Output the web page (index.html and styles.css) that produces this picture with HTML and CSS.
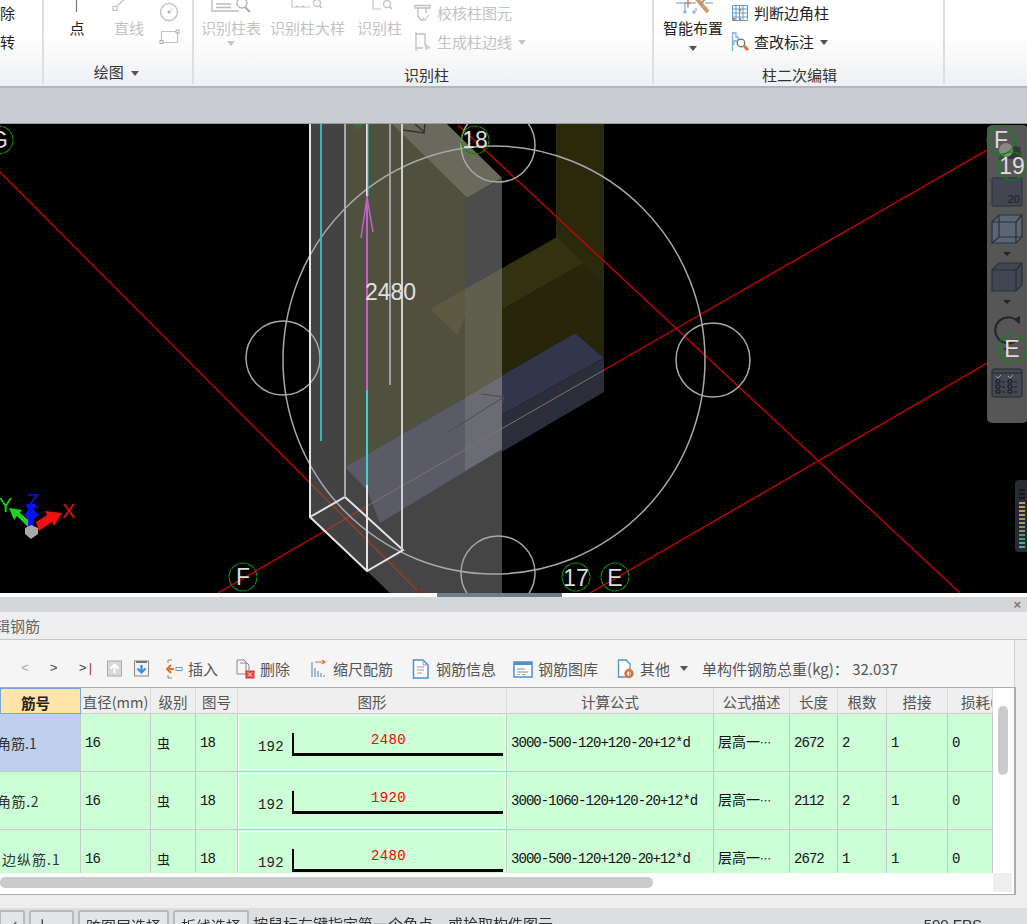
FILE: index.html
```html
<!DOCTYPE html>
<html lang="zh-CN">
<head>
<meta charset="utf-8">
<title>编辑钢筋</title>
<link rel="stylesheet" href="styles.css">
</head>
<body>
<div class="page">
  <header class="ribbon">
    <section class="group g1">
      <div class="stack-text"><span>除</span><span>转</span></div>
    </section>
    <section class="group g2">
      <div class="group-body">
        <div class="big w40">
          <svg class="big-icon" width="40" height="18" viewBox="0 0 40 18"><path d="M19.5 0V12" stroke="#777" stroke-width="1.2"/></svg>
          <span class="dark">点</span>
        </div>
        <div class="big w40">
          <svg class="big-icon" width="40" height="18" viewBox="0 0 40 18"><path d="M8 6 16 -1" stroke="#c4c4c4" stroke-width="1.2"/><rect x="4" y="6.500" width="4" height="4" fill="none" stroke="#bbb"/></svg>
          <span class="off">直线</span>
        </div>
        <div class="tiny-col">
          <svg width="24" height="24" viewBox="0 0 24 24"><circle cx="12" cy="12" r="8.500" fill="none" stroke="#c4c4c4" stroke-width="1.500"/><circle cx="12" cy="12" r="1.500" fill="#aaa"/><path d="M12 12 16 8" stroke="#c4c4c4"/></svg>
          <svg width="24" height="20" viewBox="0 0 24 20"><path d="M4.500 4.500H20.500V15.500H4.500Z" fill="none" stroke="#c4c4c4" stroke-width="1.200"/><rect x="3" y="13.500" width="3" height="3" fill="#fff" stroke="#aaa"/><rect x="19" y="3" width="3" height="3" fill="#fff" stroke="#aaa"/></svg>
        </div>
      </div>
      <div class="group-label label-draw">绘图 <i class="caret dark-caret"></i></div>
    </section>
    <section class="group g3">
      <div class="group-body">
        <div class="big w60">
          <svg class="big-icon" width="60" height="18" viewBox="0 0 60 18"><path d="M11 -2V11H38M15 4H30M15 7.500H30" fill="none" stroke="#bbb" stroke-width="1.300"/><circle cx="41" cy="3" r="5" fill="none" stroke="#bbb" stroke-width="1.500"/><path d="M44 7 49 12" stroke="#aaa" stroke-width="2"/></svg>
          <span class="off">识别柱表</span>
          <i class="caret off-caret"></i>
        </div>
        <div class="big w75">
          <svg class="big-icon" width="75" height="18" viewBox="0 0 75 18"><path d="M22 -2V7H40M26 6H28M32 6H34" fill="none" stroke="#c4c4c4" stroke-width="1.200"/><circle cx="47" cy="3" r="3.500" fill="none" stroke="#c4c4c4" stroke-width="1.300"/><path d="M49.500 5.500 52 8" stroke="#bbb" stroke-width="1.500"/></svg>
          <span class="off">识别柱大样</span>
        </div>
        <div class="big w45">
          <svg class="big-icon" width="45" height="18" viewBox="0 0 45 18"><path d="M16 -2V9H24" fill="none" stroke="#c4c4c4" stroke-width="1.200"/><circle cx="30" cy="4" r="3.500" fill="none" stroke="#c4c4c4" stroke-width="1.300"/><path d="M32.500 6.500 35 9" stroke="#bbb" stroke-width="1.500"/></svg>
          <span class="off">识别柱</span>
        </div>
        <div class="small-col">
          <div class="small-row off">
            <svg width="18" height="20" viewBox="0 0 18 20"><path d="M1 2.500H16V5H1ZM4 5V13L7 17H10M12 5V10" fill="none" stroke="#c0c0c0" stroke-width="1.300"/><path d="M9 15 11 17 15 12" fill="none" stroke="#c8c8c8" stroke-width="1.200"/></svg>
            <span>校核柱图元</span>
          </div>
          <div class="small-row off">
            <svg width="18" height="20" viewBox="0 0 18 20"><path d="M2 0V19M2 2H11V14M2 16H9" fill="none" stroke="#c0c0c0" stroke-width="1.300"/><path d="M11 11 17 16 11 18Z" fill="#d0d0d0"/></svg>
            <span>生成柱边线</span>
            <i class="caret off-caret row-caret"></i>
          </div>
        </div>
      </div>
      <div class="group-label label-shift">识别柱</div>
    </section>
    <section class="group g4">
      <div class="group-body">
        <div class="big w60 smart">
          <svg class="big-icon" width="60" height="18" viewBox="0 0 60 18"><path d="M13 3H33M25 -1V8M33 8V11M22 3V11M42 3H50" fill="none" stroke="#5d9bd5" stroke-width="1"/><path d="M25 0V6M22 3H28" stroke="#e8702a" stroke-width="1"/><circle cx="22" cy="12" r="1.800" fill="#8fb8dc"/><circle cx="31" cy="12" r="1.800" fill="#8fb8dc"/><path d="M33 -2 45 12" stroke="#d49a63" stroke-width="4"/><path d="M42 -1 37 5" stroke="#999" stroke-width="2"/></svg>
          <span class="dark">智能布置</span>
          <i class="caret dark-caret"></i>
        </div>
        <div class="small-col">
          <div class="small-row dark">
            <svg width="18" height="20" viewBox="0 0 18 20"><path d="M1.500 2.500H16.500V17.500H1.500ZM5 2.500V17.500M8.500 2.500V17.500M12 2.500V17.500M1.500 6H16.500M1.500 10H16.500M1.500 14H16.500" fill="none" stroke="#5d9bd5" stroke-width="1"/><circle cx="9" cy="7" r="1.300" fill="#e8702a"/><circle cx="3" cy="16" r="1.300" fill="#e8702a"/><circle cx="9" cy="16" r="1.300" fill="#e8702a"/></svg>
            <span>判断边角柱</span>
          </div>
          <div class="small-row dark">
            <svg width="18" height="20" viewBox="0 0 18 20"><path d="M1.500 0V19M1.500 1H5V5H7V9H3V13" fill="none" stroke="#7aaedc" stroke-width="1.300"/><circle cx="10" cy="11" r="3.800" fill="#fff" stroke="#666" stroke-width="1.200"/><path d="M13 14 17 18" stroke="#e8702a" stroke-width="3"/></svg>
            <span>查改标注</span>
            <i class="caret dark-caret row-caret"></i>
          </div>
        </div>
      </div>
      <div class="group-label label-edit">柱二次编辑</div>
    </section>
  </header>

  <div class="subbar"></div>

  <svg class="scene" width="1027" height="469" viewBox="0 124 1027 469" role="img">
    <rect x="0" y="124" width="1027" height="469" fill="#000"/>
    <path d="M556 124H604V300H556Z" fill="#2a290c"/>
    <path d="M458 335 583 263 604 284V358L575 333 345 467Z" fill="#27260a"/>
    <path d="M430 309 557 237 583 263 458 335Z" fill="#33320f"/>
    <path d="M345 467 575 333 604 358 367 490Z" fill="#33354b"/>
    <path d="M367 490 604 358V392L380 523Z" fill="#2c2d3b"/>
    <path d="M310 124H345V497L310 517Z" fill="#434343"/>
    <path d="M345 124H392L467 198 502 178V593H390L367 571 403 550 345 497Z" fill="#454545"/>
    <path d="M310 517 345 497 403 550 367 571Z" fill="#434343"/>
    <path d="M345 124H392L467 198 465 398 345 467Z" fill="#50503e"/>
    <path d="M392 124H447L502 178 467 198Z" fill="#6a6a5c"/>
    <path d="M465 199 502 179V268L465 289Z" fill="#4c4c4c"/>
    <path d="M465 289 502 268V376L465 398Z" fill="#5f5f4e"/>
    <path d="M430 309 465 289V316L458 335Z" fill="#5d5a42"/>
    <path d="M345 467 465 398 502 376V449L380 523 367 490Z" fill="#5a5b66"/>
    <path d="M465 398 502 376V449L465 471Z" fill="#6b6b73"/>
    <path d="M352 124H363L358 130Z" fill="#3b6b3b"/>
    <path d="M403 130 424 133 425 124M415 124 424 132" fill="none" stroke="#333" stroke-width="1.500"/>
    <path d="M447 433 504 397 502 403M481 394 504 397" fill="none" stroke="#4b4b4b"/>

    <g class="red">
      <path d="M0 172 308 481M417 590 421 593M458 125 960 593M590 593 1027 340M1027 127 604 370M323 532 218 593"/>
    </g>
    <path d="M308 481 417 590M367 506 323 532" fill="none" stroke="#a83a2a" stroke-width="1.200"/>
    <path d="M604 370 367 506" fill="none" stroke="#8a6d6d" stroke-width="1"/>
    <g class="ring">
      <ellipse cx="494" cy="360" rx="211" ry="214"/>
      <circle cx="498" cy="145" r="37"/>
      <circle cx="283" cy="358" r="37"/>
      <circle cx="713" cy="360" r="37"/>
      <circle cx="498" cy="573" r="37"/>
    </g>
    <g class="wire">
      <path d="M310 124V517L367 571 403 550 345 497 310 517M367 124V571"/>
    </g>
    <path d="M345 124V497" stroke="#a8a8a8" stroke-width="2" fill="none"/>
    <path d="M390 124V385" stroke="#a0a0a0" stroke-width="2" fill="none"/>
    <path d="M402 124V550" stroke="#d0d0d0" stroke-width="2" fill="none"/>
    <path d="M321 124V441" stroke="#3ab5b8" stroke-width="2" fill="none"/>
    <path d="M368 124V196" stroke="#3ab5b8" stroke-width="1" fill="none"/>
    <path d="M367 196V390" stroke="#c060c8" stroke-width="2" fill="none"/>
    <path d="M367 390V485" stroke="#3ed0d0" stroke-width="2" fill="none"/>
    <path d="M361 238 367 197 373 232" stroke="#c060c8" stroke-width="1.500" fill="none"/>
    <text class="dim-text" x="365" y="300">2480</text>

    <g class="badge"><circle cx="-1" cy="140" r="14"/><text x="-1" y="148">G</text></g>
    <g class="badge"><circle cx="475" cy="140" r="14"/><text x="475" y="148">18</text></g>
    <g class="badge"><circle cx="243" cy="577" r="14"/><text x="243" y="585">F</text></g>
    <g class="badge"><circle cx="576" cy="577" r="14"/><text x="576" y="586">17</text></g>
    <g class="badge"><circle cx="615" cy="577" r="14"/><text x="615" y="586">E</text></g>

    <rect x="987" y="125" width="41" height="298" rx="5" fill="#565656"/>
    <path d="M998 160 1004 148Q1012 144 1020 147L1022 158" fill="#2e2e2e" opacity=".8"/>
    <circle cx="1006" cy="150" r="7" fill="#888"/>
    <rect x="992" y="178" width="30" height="28" rx="1" fill="#404652" stroke="#2c2f36"/>
    <text class="panel-num" x="1020" y="203">20</text>
    <g stroke="#2b2e34" stroke-width="1.200" fill="#5a6675">
      <path d="M992 222 999 215H1022V237L1016 243H992Z"/>
      <path d="M992 222H1016V243M1016 222 1022 215M999 215V237H1022M999 237 992 243" fill="none"/>
    </g>
    <path d="M1003 252H1011L1007 256Z" fill="#222"/>
    <g stroke="#2b2e34" stroke-width="1.200" fill="#404652">
      <path d="M992 270 999 263H1022V285L1016 291H992Z"/>
      <path d="M992 270H1016V291M1016 270 1022 263" fill="none"/>
    </g>
    <path d="M1003 300H1011L1007 304Z" fill="#222"/>
    <path d="M1019 323A13 13 0 1 0 1017 340" fill="none" stroke="#25272b" stroke-width="2.200"/>
    <path d="M1014 319 1020 324 1020 316Z" fill="#25272b"/>
    <path d="M1003 348H1011L1007 352Z" fill="#222"/>
    <rect x="992" y="369" width="30" height="28" rx="2" fill="#434954" stroke="#25272b"/>
    <path d="M992 373H1022" stroke="#25272b" fill="none"/>
    <path d="M996 376 998 378 1001 375M1008 376 1010 378 1013 375" stroke="#9aa0a8" fill="none"/>
    <path d="M996 380H1000V383H996ZM996 385H1000V388H996ZM996 390H1000V393H996ZM1008 380H1012V383H1008ZM1008 385H1012V388H1008ZM1008 390H1012V393H1008ZM1002 382H1005M1002 387H1005M1002 392H1005M1014 382H1017M1014 387H1017M1014 392H1017" stroke="#16181c" fill="none"/>

    <g class="badge"><circle cx="1001" cy="140" r="14"/><text x="1001" y="148">F</text></g>
    <g class="badge"><circle cx="1012" cy="166" r="14"/><text x="1012" y="174">19</text></g>
    <g class="badge"><circle cx="1012" cy="349" r="14"/><text x="1012" y="357">E</text></g>

    <rect x="1015" y="480" width="14" height="72" rx="4" fill="#282b33"/>
    <path d="M1019 490H1025M1019 494H1025M1019 498H1025" stroke="#17181c" stroke-width="2"/>
    <path d="M1019 503H1025M1019 507H1025M1019 511H1025M1019 515H1025" stroke="#c89a5f" stroke-width="2"/>
    <path d="M1019 519H1025M1019 523H1025" stroke="#a49a68" stroke-width="2"/>
    <path d="M1019 527H1025M1019 531H1025" stroke="#7c9a6c" stroke-width="2"/>
    <path d="M1019 535H1025M1019 539H1025" stroke="#4aa070" stroke-width="2"/>
    <path d="M1019 543H1025M1019 547H1025" stroke="#3fb0b4" stroke-width="2"/>

    <path d="M28 527 17 516 14 520 9 508 22 510 20 513 32 523Z" fill="#1dd41d"/>
    <path d="M36 522 47 515 45 511 62 513 54 526 52 522 39 531Z" fill="#f01010"/>
    <path d="M28 529V519L24 515 28 510 26 504H36L34 510 39 515 34 519V529Z" fill="#0a10f0"/>
    <path d="M31 525 38 528V534L31 539 25 534V528Z" fill="#a8a8a8"/>
    <text class="axis axis-y" x="-1" y="512">Y</text>
    <text class="axis axis-z" x="27" y="508">Z</text>
    <text class="axis axis-x" x="62" y="518">X</text>
  </svg>

  <div class="splitter"><div class="grip"></div></div>

  <section class="panel">
    <div class="panel-top"><span class="close">×</span></div>
    <div class="panel-title"><span>辑钢筋</span></div>
    <div class="toolbar">
      <div class="nav-arrows"><span class="nav-off">&lt;</span><span>&gt;</span><span>&gt;<b class="nav-bar">|</b></span></div>
      <svg class="ico up" width="15" height="17" viewBox="0 0 15 17"><rect x=".5" y="1" width="14" height="15" fill="#d9d9d9" stroke="#aaa"/><path d="M7.500 13V5M3.500 8.500 7.500 4.500 11.500 8.500" fill="none" stroke="#fff" stroke-width="2"/></svg>
      <svg class="ico down" width="15" height="17" viewBox="0 0 15 17"><rect x=".5" y="1" width="14" height="15" fill="#eef3f9" stroke="#888"/><path d="M2 2H13" stroke="#777" stroke-width="2"/><path d="M7.500 5V12M3.500 8.500 7.500 12.500 11.500 8.500" fill="none" stroke="#3a8ee0" stroke-width="2.200"/></svg>
      <div class="tool">
        <svg width="17" height="20" viewBox="0 0 17 20"><path d="M2 1H6M2 1V4M2 16V19H6M3 7H5M3 13H5" fill="none" stroke="#888"/><path d="M1 10H8M5 6 1 10 5 14" fill="none" stroke="#e8702a" stroke-width="2"/><rect x="10" y="8.500" width="6" height="3" fill="#fff" stroke="#5d9bd5"/></svg>
        <span>插入</span>
      </div>
      <div class="tool">
        <svg width="19" height="20" viewBox="0 0 19 20"><path d="M1 1H8L10 3V15H1ZM4 4H11L13 6V11" fill="#f5f5f5" stroke="#888"/><rect x="10" y="12" width="8" height="7" fill="#e44" stroke="#c33"/><path d="M12 13.500 16 17.500M16 13.500 12 17.500" stroke="#fff"/></svg>
        <span>删除</span>
      </div>
      <div class="tool t-scale">
        <svg width="17" height="20" viewBox="0 0 17 20"><path d="M1 3V18M4 9V18M7 12V18M10 14V18M13 16V18" stroke="#7f98b2" stroke-width="1.300" fill="none"/><path d="M4 3H13M11 1 14 3 11 5" stroke="#e8702a" fill="none" stroke-width="1.200"/></svg>
        <span>缩尺配筋</span>
      </div>
      <div class="tool t-info">
        <svg width="19" height="20" viewBox="0 0 19 20"><path d="M1.500 1H11L16 6V19H1.500Z" fill="#fff" stroke="#4a90d9" stroke-width="1.500"/><path d="M11 1V6H16M5 8H12M5 11H12M5 14H10" fill="none" stroke="#999"/></svg>
        <span>钢筋信息</span>
      </div>
      <div class="tool t-lib">
        <svg width="20" height="20" viewBox="0 0 20 20"><rect x="1" y="3" width="18" height="15" fill="#fff" stroke="#4a90d9" stroke-width="1.500"/><rect x="1" y="3" width="18" height="3" fill="#4a90d9"/><path d="M4 10H12M4 13H15" stroke="#888"/><path d="M4 15.500H7" stroke="#e8a13a"/><path d="M9 15.500H12" stroke="#5cb85c"/></svg>
        <span>钢筋图库</span>
      </div>
      <div class="tool t-other">
        <svg width="18" height="20" viewBox="0 0 18 20"><path d="M1.500 1H9L13 5V18H1.500Z" fill="#fff" stroke="#4a90d9" stroke-width="1.300"/><circle cx="12" cy="14.500" r="3.500" fill="none" stroke="#e8702a" stroke-width="2.500"/></svg>
        <span>其他</span>
      </div>
      <i class="caret dark-caret t-caret"></i>
      <span class="total">单构件钢筋总重(kg)： 32.037</span>
    </div>

    <div class="frame">
      <div class="frame-main">
        <div class="grid-clip">
          <table class="grid">
            <colgroup>
              <col class="c1"><col class="c2"><col class="c3"><col class="c4"><col class="c5"><col class="c6"><col class="c7"><col class="c8"><col class="c9"><col class="c10"><col class="c11">
            </colgroup>
            <thead>
              <tr>
                <th class="active-head">筋号</th>
                <th>直径(mm)</th>
                <th>级别</th>
                <th>图号</th>
                <th>图形</th>
                <th>计算公式</th>
                <th>公式描述</th>
                <th>长度</th>
                <th>根数</th>
                <th>搭接</th>
                <th class="clip-head">损耗(%)</th>
              </tr>
            </thead>
            <tbody>
              <tr class="r1">
                <td class="name selected"><span class="name-a">角筋.1</span></td>
                <td>16</td><td class="grade">虫</td><td>18</td>
                <td class="shape-cell"><div class="shape"><span class="hook">192</span><div class="bar">2480</div></div></td>
                <td>3000-500-120+120-20+12*d</td><td class="desc">层高一<span class="ell">…</span></td><td>2672</td><td>2</td><td>1</td><td>0</td>
              </tr>
              <tr class="r2">
                <td class="name"><span class="name-a wide">角筋.2</span></td>
                <td>16</td><td class="grade">虫</td><td>18</td>
                <td class="shape-cell"><div class="shape"><span class="hook">192</span><div class="bar">1920</div></div></td>
                <td>3000-1060-120+120-20+12*d</td><td class="desc">层高一<span class="ell">…</span></td><td>2112</td><td>2</td><td>1</td><td>0</td>
              </tr>
              <tr class="r3">
                <td class="name"><span class="name-b">边纵筋.1</span></td>
                <td>16</td><td class="grade">虫</td><td>18</td>
                <td class="shape-cell"><div class="shape"><span class="hook">192</span><div class="bar">2480</div></div></td>
                <td>3000-500-120+120-20+12*d</td><td class="desc">层高一<span class="ell">…</span></td><td>2672</td><td>1</td><td>1</td><td>0</td>
              </tr>
            </tbody>
          </table>
        </div>
        <div class="vscroll"><div class="vthumb"></div></div>
      </div>
      <div class="frame-foot">
        <div class="hscroll"><div class="hthumb"></div></div>
        <div class="corner"></div>
      </div>
    </div>
    <div class="panel-bottom"></div>
  </section>

  <footer class="status">
    <span class="st-btn b1">∠</span>
    <span class="st-btn b2">十 ·</span>
    <span class="st-btn b3">跨图层选择</span>
    <span class="st-btn b4">折线选择</span>
    <span class="st-msg">按鼠标左键指定第一个角点，或拾取构件图元</span>
    <span class="st-fps">500 FPS</span>
  </footer>
</div>
</body>
</html>
```
FILE: styles.css
```css
* { box-sizing: border-box; }
html, body { margin: 0; padding: 0; background: #fff; }
body { width: 1027px; height: 924px; overflow: hidden; font-family: "Noto Sans CJK SC", "Liberation Sans", sans-serif; }
.page { width: 1027px; height: 924px; overflow: hidden; display: flex; flex-direction: column; filter: blur(.35px); }

/* ribbon */
.ribbon { height: 88px; flex: none; display: flex; background: linear-gradient(#fff 0, #fff 35px, #eff0f2 86px); border-bottom: 2px solid #b4b7ba; font-size: 15px; line-height: 20px; }
.group { height: 84px; border-right: 2px solid #dcdee0; flex: none; display: flex; flex-direction: column; margin-right: 1px; }
.g1 { width: 44px; }
.g2 { width: 149px; }
.g3 { width: 459px; }
.g4 { width: 290px; }
.stack-text { display: flex; flex-direction: column; gap: 9px; padding-top: 3px; color: #222; }
.group-body { height: 62px; display: flex; flex: none; }
.g2 .group-body { padding-left: 12px; gap: 12px; }
.g3 .group-body { padding-left: 6px; gap: 12px; }
.g4 .group-body { padding-left: 8px; gap: 8px; }
.big { display: flex; flex-direction: column; align-items: center; flex: none; }
.big-icon { display: block; }
.w40 { width: 40px; }
.w45 { width: 45px; }
.w60 { width: 60px; margin-right: -3px; }
.w75 { width: 75px; }
.g4 .w60 { margin-right: 0; }
.tiny-col { width: 24px; margin-left: -4px; display: flex; flex-direction: column; gap: 3px; }
.small-col { display: flex; flex-direction: column; gap: 3px; }
.small-row { height: 26px; display: flex; align-items: center; gap: 5px; white-space: nowrap; }
.off { color: #c2c2c2; }
.dark { color: #222; }
.caret { display: inline-block; width: 0; height: 0; border-left: 4.500px solid transparent; border-right: 4.500px solid transparent; border-top: 5px solid #666; }
.big .caret { margin-top: 3px; }
.big.smart .caret { margin-top: 8px; }
.off-caret { border-top-color: #c6c6c6; }
.dark-caret { border-top-color: #555; }
.row-caret { margin-left: 1px; }
.group-label { text-align: center; color: #333; height: 20px; line-height: 20px; white-space: nowrap; }
.label-draw { margin-left: -4px; }
.label-draw .caret { margin-left: 4px; vertical-align: 2px; }
.label-shift { margin-top: 3px; padding-left: 6px; }
.label-edit { margin-top: 3px; padding-left: 1px; }

.subbar { height: 36px; flex: none; background: #c9ccd0; border-bottom: 1px solid #9a9da0; }

/* 3d canvas */
.scene { display: block; flex: none; }
.red path { fill: none; stroke: #d40000; stroke-width: 1.300; }
.ring circle, .ring ellipse { fill: none; stroke: #a8a8a8; stroke-width: 1.500; }
.wire path { fill: none; stroke: #e4e4e4; stroke-width: 2; }
.dim-text { font: 23px "Liberation Sans", sans-serif; fill: #e0e0e0; }
.badge circle { fill: none; stroke: #0b8a0b; stroke-width: 1.200; stroke-dasharray: 8 .7; }
.badge text { font: 23px "Liberation Sans", sans-serif; fill: #ddd; text-anchor: middle; }
.panel-num { font: 11px "Liberation Sans", sans-serif; fill: #1c1f24; text-anchor: end; }
.axis { font: 20px "Liberation Sans", sans-serif; }
.axis-y { fill: #1dd41d; }
.axis-z { fill: #0a10f0; }
.axis-x { fill: #e01010; }

.splitter { height: 4px; flex: none; background: #fff; display: flex; justify-content: center; padding-right: 28px; }
.grip { width: 125px; height: 4px; background: #6f7d8c; }

/* panel */
.panel { flex: none; height: 311px; background: #eeeeee; display: flex; flex-direction: column; }
.panel-top { height: 15px; flex: none; background: #d4d6da; display: flex; justify-content: flex-end; align-items: center; padding-right: 6px; }
.close { color: #777; font: bold 13px/15px "Liberation Sans", sans-serif; }
.panel-title { height: 28px; flex: none; background: #efefef; border-bottom: 1px solid #c6c6c6; color: #666; font-size: 15px; line-height: 27px; overflow: hidden; white-space: nowrap; }
.panel-title span { display: block; margin-left: -5px; }
.toolbar { height: 47px; flex: none; margin-right: 12px; background: #f5f5f5; border-right: 1px solid #d0d0d0; display: flex; align-items: center; gap: 18px; padding-top: 10px; font-size: 15px; color: #555; white-space: nowrap; }
.nav-arrows { width: 107px; padding-left: 21px; display: flex; gap: 21px; font: 13px "Liberation Mono", monospace; color: #444; margin-right: -18px; }
.nav-off { color: #aaa; }
.nav-bar { color: #a33; font-weight: 400; }
.ico { flex: none; }
.down { margin-left: -6px; margin-right: -1px; }
.tool { display: flex; align-items: center; gap: 5px; flex: none; }
.tool svg { flex: none; display: block; }
.t-scale { margin-left: 3px; }
.t-info { margin-left: 1px; }
.t-lib { margin-left: -1px; }
.t-other { margin-left: 1px; }
.t-caret { margin-left: -8px; }
.total { margin-left: -4px; font-size: 15px; color: #555; }

/* table */
.frame { height: 208px; flex: none; margin-right: 11px; background: #fff; border-top: 1px solid #b0b0b0; border-right: 2px solid #a8adb3; border-bottom: 1px solid #a8adb3; display: flex; flex-direction: column; }
.frame-main { height: 185px; flex: none; display: flex; overflow: hidden; }
.grid-clip { width: 993px; height: 185px; flex: none; overflow: hidden; }
.grid { table-layout: fixed; width: 993px; border-collapse: separate; border-spacing: 0; }
.c1 { width: 81px; } .c2 { width: 70px; } .c3 { width: 45px; } .c4 { width: 42px; } .c5 { width: 269px; } .c6 { width: 207px; }
.c7 { width: 76px; } .c8 { width: 48px; } .c9 { width: 49px; } .c10 { width: 61px; } .c11 { width: 45px; }
.grid th { height: 26px; padding: 2px 0 0; background: #efefef; border-right: 1px solid #dadada; border-bottom: 1px solid #d0d0d0; font-size: 14.500px; font-weight: 400; color: #555; white-space: nowrap; overflow: hidden; }
.grid th.active-head { background: #ffe6a8; color: #222; font-weight: 700; border: 1px solid #7ba7d7; padding-right: 10px; }
.grid th.clip-head { text-align: left; padding-left: 13px; }
.grid td { padding: 0 0 0 4px; background: #ccffd6; border-right: 1px solid #c8c8c8; border-bottom: 1px solid #c8c8c8; font: 14px "Liberation Mono", "Noto Sans CJK SC", monospace; letter-spacing: -.95px; color: #111; white-space: nowrap; overflow: hidden; vertical-align: middle; }
.r1 td { height: 58px; }
.r2 td { height: 57px; }
.r3 td { height: 58px; }
.grid td.name { padding: 0; font: 14px "Noto Sans CJK SC", sans-serif; letter-spacing: 0; color: #333; }
.grid td.selected { background: #bfd0ee; }
.name-a { display: block; margin-left: -3px; }
.name-a.wide { letter-spacing: .6px; }
.name-b { display: block; margin-left: 2px; letter-spacing: 1px; }
.grid td.grade { font: 13px "Noto Sans CJK SC", sans-serif; letter-spacing: 0; padding-left: 6px; }
.grid td.desc { font: 14px/14px "Noto Sans CJK SC", sans-serif; letter-spacing: 0; padding-bottom: 2px; }
.ell { font-size: 11px; letter-spacing: -1px; }
.grid td.shape-cell { padding: 0; vertical-align: top; letter-spacing: 0; }
.shape { height: 53px; margin: 2px 1px; background: #ccffd6; outline: 1px solid #fff; display: flex; align-items: flex-start; padding-left: 19px; padding-top: 17px; }
.hook { width: 34px; font: 14px "Liberation Mono", monospace; color: #222; padding-top: 6px; letter-spacing: .2px; }
.bar { width: 211px; height: 23px; border-left: 2px solid #000; border-bottom: 3px solid #000; color: #f00; text-align: center; font: 14px/15px "Liberation Mono", monospace; letter-spacing: .3px; padding-right: 20px; }
.vscroll { flex: 1; background: #fff; padding: 18px 0 0 5px; }
.vthumb { width: 10px; height: 69px; border-radius: 5px; background: #cbcbcb; }
.frame-foot { flex: 1; display: flex; }
.hscroll { width: 993px; flex: none; padding-top: 4px; background: #fff; }
.hthumb { width: 653px; height: 11px; border-radius: 5px; background: #cbcbcb; }
.corner { width: 19px; height: 19px; background: #eeeeee; }
.panel-bottom { flex: 1; background: #eeeeee; }

/* status */
.status { flex: 1; min-height: 0; background: #dcdee0; display: flex; align-items: flex-start; gap: 4px; padding-top: 2px; font-size: 15px; line-height: 28px; color: #333; white-space: nowrap; overflow: hidden; }
.st-btn { height: 24px; border: 2px solid #b8babc; border-radius: 2px; background: #e4e5e7; display: block; text-align: center; flex: none; }
.b1 { width: 26px; margin-left: -1px; }
.b2 { width: 45px; }
.b3 { width: 91px; }
.b4 { width: 76px; }
.st-fps { margin-left: auto; margin-right: 45px; font: 15px/30px "Liberation Sans", sans-serif; }
```
